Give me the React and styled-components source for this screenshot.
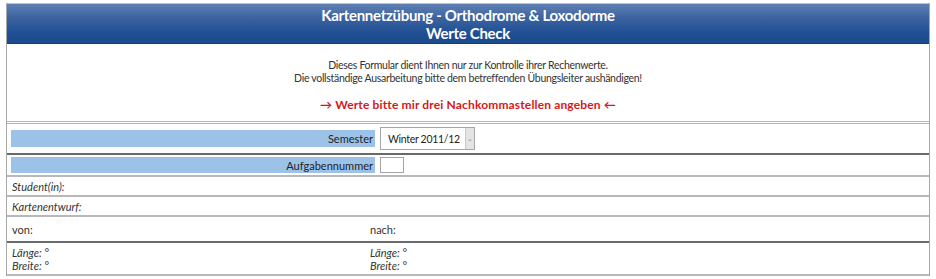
import React from "react";
import styled, { createGlobalStyle } from "styled-components";

const Global = createGlobalStyle`
  html, body { margin: 0; padding: 0; background: #fff; }
  body { font-family: Lato, "Open Sans", "Liberation Sans", sans-serif; color: #333; }
`;

const Page = styled.div`
  padding: 3px 6px 0 6px;
  width: 924px;
`;

const Panel = styled.div`
  border-left: 1px solid #a8a8a8;
  border-right: 1px solid #a8a8a8;
`;

const Header = styled.div`
  height: 41px;
  border-top: 1px solid #b9c3d3;
  background: linear-gradient(#5f80b4 0%, #3d63a0 35%, #1f4f93 75%, #1b4a8c 100%);
  border-bottom: 1px solid #163f7a;
  color: #fff;
  font-weight: 700;
  font-size: 15px;
  letter-spacing: -0.3px;
  line-height: 18px;
  text-align: center;
  display: flex;
  flex-direction: column;
  justify-content: center;
  padding-top: 1px;
  box-sizing: border-box;
`;

const Intro = styled.div`
  height: 80px;
  box-sizing: border-box;
  padding-top: 15px;
  text-align: center;
  font-size: 10.5px;
  letter-spacing: -0.3px;
  line-height: 13px;
  color: #333;
  border-bottom: 3px double #b8b8b8;
`;

const Warn = styled.div`
  margin-top: 13px;
  color: #d71818;
  font-weight: 700;
  font-size: 12px;
  letter-spacing: 0.15px;
`;

const Row = styled.div`
  display: flex;
  align-items: center;
  height: ${(p) => p.$h}px;
  box-sizing: border-box;
  border-bottom: ${(p) => (p.$dark ? "2px solid #6a6a6a" : "2px solid #b8b8b8")};
  padding: 0 3px;
  font-size: 11px;
  color: #333;
`;

const Label = styled.div`
  width: 364px;
  height: ${(p) => p.$h}px;
  background: #9cc3e7;
  color: #222;
  display: flex;
  align-items: center;
  justify-content: flex-end;
  padding-right: 2px;
  box-sizing: border-box;
  margin-left: 1px;
`;

const Select = styled.div`
  margin-left: 5px;
  width: 95px;
  height: 23px;
  border: 1px solid #a5a5a5;
  box-sizing: border-box;
  display: flex;
  align-items: center;
  font-size: 10.5px;
  letter-spacing: -0.3px;
  color: #222;
  padding-left: 7px;
  white-space: nowrap;
  overflow: hidden;
`;

const Arrow = styled.div`
  margin-left: auto;
  flex-shrink: 0;
  width: 8px;
  height: 21px;
  background: #e4e4e4;
  border-left: 1px solid #c8c8c8;
  display: flex;
  align-items: center;
  justify-content: center;
  color: #888;
  font-size: 7px;
  letter-spacing: 0;
`;

const Box = styled.div`
  margin-left: 5px;
  width: 24px;
  height: 16px;
  border: 1px solid #a5a5a5;
  box-sizing: border-box;
`;

const Italic = styled.div`
  font-style: italic;
  color: #333;
  padding-left: 2px;
`;

const Col = styled.div`
  width: ${(p) => p.$w}px;
  padding-left: 2px;
  font-style: ${(p) => (p.$i ? "italic" : "normal")};
  line-height: 13px;
`;

export default function App() {
  return (
    <Page>
      <Global />
      <Panel>
        <Header>
          <div>Kartennetzübung - Orthodrome &amp; Loxodorme</div>
          <div>Werte Check</div>
        </Header>
        <Intro>
          <div>Dieses Formular dient Ihnen nur zur Kontrolle ihrer Rechenwerte.</div>
          <div>Die vollständige Ausarbeitung bitte dem betreffenden Übungsleiter aushändigen!</div>
          <Warn>→ Werte bitte mir drei Nachkommastellen angeben ←</Warn>
        </Intro>
        <Row $h={31} $dark>
          <Label $h={17}>Semester</Label>
          <Select>
            Winter 2011/12
            <Arrow>⌄</Arrow>
          </Select>
        </Row>
        <Row $h={22}>
          <Label $h={16}>Aufgabennummer</Label>
          <Box />
        </Row>
        <Row $h={20}>
          <Italic>Student(in):</Italic>
        </Row>
        <Row $h={20}>
          <Italic>Kartenentwurf:</Italic>
        </Row>
        <Row $h={26} $dark>
          <Col $w={356}>von:</Col>
          <Col>nach:</Col>
        </Row>
        <Row $h={33}>
          <Col $w={356} $i>
            Länge: °<br />
            Breite: °
          </Col>
          <Col $i>
            Länge: °<br />
            Breite: °
          </Col>
        </Row>
      </Panel>
    </Page>
  );
}
